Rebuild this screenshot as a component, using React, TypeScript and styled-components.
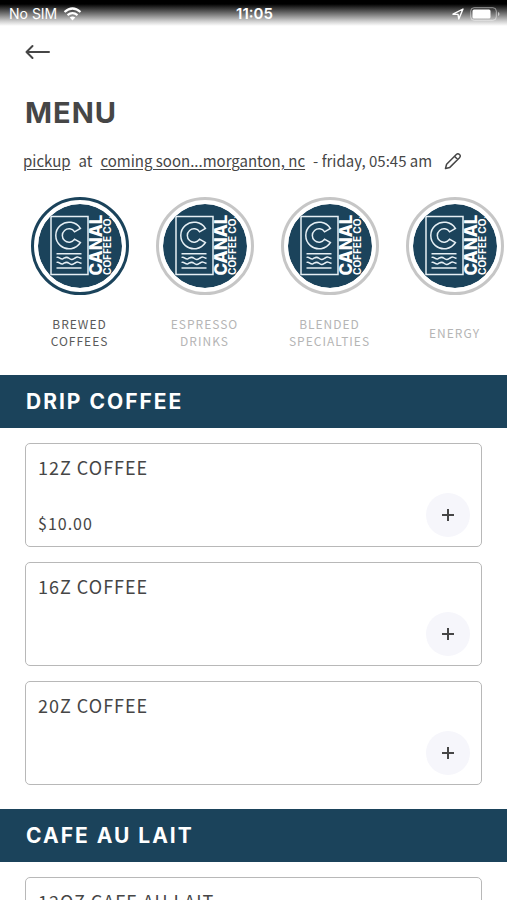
import React from "react";
import styled, { createGlobalStyle } from "styled-components";

const navy = "#1b435b";
const ink = "#464646";
const bodyFont = `"Noto Sans CJK SC", "Noto Sans", sans-serif`;
const headingFont = `Inter, "Open Sans", sans-serif`;

const GlobalStyle = createGlobalStyle`
  * { box-sizing: border-box; }
  body { margin: 0; background: #fff; color: ${ink}; font-family: ${bodyFont}; }
  button { font: inherit; color: inherit; border: 0; background: none; padding: 0; cursor: pointer; }
  h1, h2, h3, p { margin: 0; }
`;

const Page = styled.div`
  height: 100vh;
  overflow: hidden auto;
  scrollbar-width: none;
`;

const StatusBar = styled.div`
  display: grid;
  grid-template-columns: 1fr auto 1fr;
  align-items: center;
  height: 26px;
  padding: 1px 7px 0 9px;
  color: #fff;
  background: linear-gradient(#000 0, #000 4px, #777 14px, #ccc 21px, #fff 26px);
  font: 14px/22px Inter, sans-serif;
`;

const StatusGroup = styled.div<{ $end?: boolean }>`
  display: flex;
  align-items: center;
  gap: 6px;
  justify-content: ${(p) => (p.$end ? "flex-end" : "flex-start")};
`;

const Clock = styled.time`
  font-size: 15px;
  font-weight: 600;
`;

const Header = styled.header`
  padding: 14px 24px 0;
`;

const IconButton = styled.button`
  display: flex;
  align-items: center;
`;

const Title = styled.h1`
  margin-top: 31px;
  padding-left: 1px;
  font: 700 29px/36px ${headingFont};
  letter-spacing: 1px;
`;

const PickupLine = styled.div`
  display: flex;
  align-items: center;
  gap: 8px;
  padding: 18px 23px 0;
  font-size: 15px;
  line-height: 24px;
  white-space: nowrap;
`;

const PickupLink = styled.a`
  color: inherit;
  text-decoration: underline;
  text-underline-offset: 2px;
`;

const EditButton = styled(IconButton)`
  margin-left: 4px;
`;

const Categories = styled.nav`
  display: flex;
  padding: 24px 0 26px 17px;
  overflow-x: auto;
  scrollbar-width: none;
`;

const Category = styled.button<{ $active: boolean }>`
  flex: 0 0 125px;
  display: flex;
  flex-direction: column;
  align-items: center;
  gap: 20px;
  color: ${(p) => (p.$active ? "#5a5a5a" : "#b5b5b5")};
`;

const Ring = styled.span<{ $active: boolean }>`
  display: block;
  width: 98px;
  height: 98px;
  padding: 4px;
  border: 3px solid ${(p) => (p.$active ? navy : "#c6c6c6")};
  border-radius: 50%;
`;

const CategoryLabel = styled.span`
  display: flex;
  flex-direction: column;
  align-items: center;
  justify-content: center;
  height: 34px;
  font-size: 12px;
  line-height: 17px;
  letter-spacing: 1px;
`;

const LabelLine = styled.span`
  display: block;
  height: 17px;
`;

const SectionTitle = styled.h2`
  padding: 0 26px;
  background: ${navy};
  color: #fff;
  font: 700 21px/53px ${headingFont};
  letter-spacing: 2px;
`;

const CardList = styled.div`
  display: grid;
  gap: 15px;
  padding: 15px 25px 24px;
`;

const Card = styled.article`
  display: flex;
  justify-content: space-between;
  height: 104px;
  padding: 9px 11px 9px 12px;
  border: 1px solid #b8b8b8;
  border-radius: 5px;
`;

const CardText = styled.div`
  display: flex;
  flex-direction: column;
  justify-content: space-between;
  padding-bottom: 1px;
  letter-spacing: 1px;
`;

const ItemName = styled.h3`
  font-size: 18px;
  font-weight: 400;
  line-height: 28px;
`;

const Price = styled.p`
  font-size: 16px;
  line-height: 26px;
`;

const AddButton = styled(IconButton)`
  align-self: flex-end;
  justify-content: center;
  width: 44px;
  height: 44px;
  border-radius: 50%;
  background: #f6f6fb;
`;

const Logo = ({ id }: { id: string }) => (
  <svg width="84" height="84" viewBox="0 0 84 84" aria-hidden="true">
    <clipPath id={id}>
      <circle cx="42" cy="42" r="42" />
    </clipPath>
    <g clipPath={`url(#${id})`}>
      <circle cx="42" cy="42" r="42" fill={navy} />
      <g fill="none" stroke="#e6eff4" strokeWidth="1.5">
        <rect x="13" y="12.5" width="37" height="58" />
        <path d="M42.400 24.500A13.300 13.300 0 1 0 42.400 38.500L36.600 35.200A6.700 6.700 0 1 1 36.600 27.800Z" />
        <path d="M18.500 49.700H43.500M18.500 64H43.500" />
        <path d="M18.500 53.500C21 51.800 22.500 56.200 25 54.800S28.500 52.200 31 54.300S34.500 55.500 37 54S40.500 53 43.500 54.500M18.500 58.500C21 56.800 22.500 61.200 25 59.800S28.500 57.200 31 59.300S34.500 60.500 37 59S40.500 58 43.500 59.500" />
      </g>
      <g fill="#fff" fontFamily="Inter, sans-serif">
        <text transform="translate(63.500 71.500) rotate(-90)" fontSize="17" fontWeight="800">CANAL</text>
        <text transform="translate(73 71) rotate(-90)" fontSize="10" fontWeight="700">COFFEE CO.</text>
      </g>
    </g>
  </svg>
);

const categories = [
  { id: "brewed", lines: ["BREWED", "COFFEES"] },
  { id: "espresso", lines: ["ESPRESSO", "DRINKS"] },
  { id: "blended", lines: ["BLENDED", "SPECIALTIES"] },
  { id: "energy", lines: ["ENERGY"] },
];

const sections: { title: string; items: { name: string; price?: string }[] }[] = [
  {
    title: "DRIP COFFEE",
    items: [{ name: "12Z COFFEE", price: "$10.00" }, { name: "16Z COFFEE" }, { name: "20Z COFFEE" }],
  },
  { title: "CAFE AU LAIT", items: [{ name: "12OZ CAFE AU LAIT" }] },
];

export default function App() {
  const [active, setActive] = React.useState("brewed");
  return (
    <Page>
      <GlobalStyle />
      <StatusBar>
        <StatusGroup>
          No SIM
          <svg width="19" height="14" viewBox="0 0 18 14" fill="none" stroke="#fff" strokeWidth="2.2">
            <path d="M1 5Q9-2 17 5M4 8.200q5-4.200 10 0" />
            <path d="M6.200 10.600q2.800-2.200 5.600 0L9 13.400Z" fill="#fff" stroke="none" />
          </svg>
        </StatusGroup>
        <Clock>11:05</Clock>
        <StatusGroup $end>
          <svg width="12" height="12" viewBox="0 0 12 12" fill="none" stroke="#fff" strokeWidth="1.4" strokeLinejoin="round">
            <path d="M1 6.200 11 1 6.800 11 6 6.400Z" />
          </svg>
          <svg width="30" height="14" viewBox="0 0 30 14">
            <rect x="0.7" y="0.7" width="25.6" height="12.6" rx="3.5" fill="none" stroke="#fff" strokeOpacity="0.5" />
            <rect x="2.5" y="2.5" width="18" height="9" rx="1.5" fill="#fff" />
            <path d="M28 5v4q1.500-.6 1.500-2T28 5Z" fill="#fff" fillOpacity="0.6" />
          </svg>
        </StatusGroup>
      </StatusBar>
      <Header>
        <IconButton aria-label="Back">
          <svg width="27" height="24" viewBox="0 0 27 24" fill="none" stroke={ink} strokeWidth="2" strokeLinecap="round" strokeLinejoin="round">
            <path d="M25 12H2.500M8.500 6 2.500 12l6 6" />
          </svg>
        </IconButton>
        <Title>MENU</Title>
      </Header>
      <PickupLine>
        <PickupLink href="#pickup">pickup</PickupLink>
        <span>at</span>
        <PickupLink href="#location">coming soon...morganton, nc</PickupLink>
        <span>- friday, 05:45 am</span>
        <EditButton aria-label="Edit pickup">
          <svg width="18" height="18" viewBox="0 0 18 18" fill="none" stroke={ink} strokeWidth="1.5" strokeLinejoin="round">
            <path d="M1.500 16.500 2.600 12.200 12.300 2.500q1.600-1.500 3.200 0t0 3.200L5.800 15.400ZM10.500 4.300l3.200 3.200" />
          </svg>
        </EditButton>
      </PickupLine>
      <Categories aria-label="Menu categories">
        {categories.map((c) => (
          <Category key={c.id} $active={c.id === active} onClick={() => setActive(c.id)}>
            <Ring $active={c.id === active}>
              <Logo id={`logo-${c.id}`} />
            </Ring>
            <CategoryLabel>
              {c.lines.map((line) => (
                <LabelLine key={line}>{line}</LabelLine>
              ))}
            </CategoryLabel>
          </Category>
        ))}
      </Categories>
      {sections.map((s) => (
        <section key={s.title}>
          <SectionTitle>{s.title}</SectionTitle>
          <CardList>
            {s.items.map((item) => (
              <Card key={item.name}>
                <CardText>
                  <ItemName>{item.name}</ItemName>
                  {item.price && <Price>{item.price}</Price>}
                </CardText>
                <AddButton aria-label={`Add ${item.name}`}>
                  <svg width="14" height="14" viewBox="0 0 14 14" stroke={ink} strokeWidth="2">
                    <path d="M7 1v12M1 7h12" />
                  </svg>
                </AddButton>
              </Card>
            ))}
          </CardList>
        </section>
      ))}
    </Page>
  );
}
